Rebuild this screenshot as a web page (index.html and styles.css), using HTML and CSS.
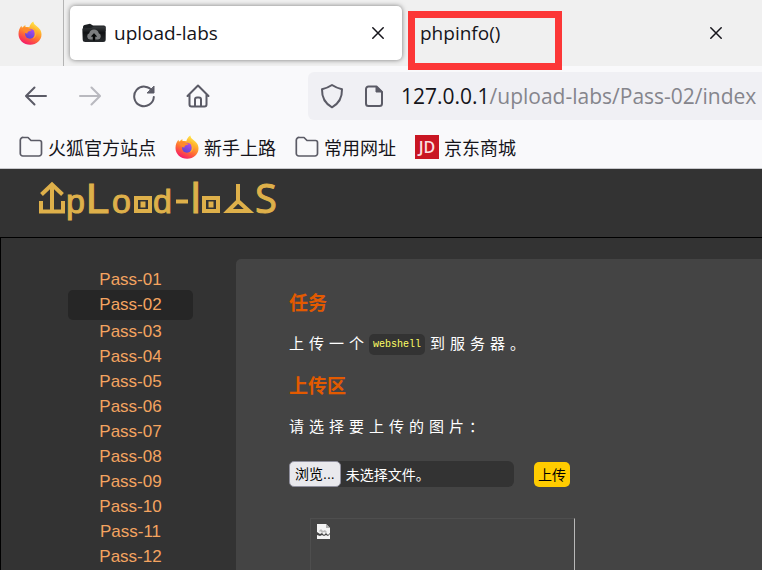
FILE: index.html
```
<!DOCTYPE html>
<html lang="zh-CN">
<head>
<meta charset="utf-8">
<meta name="viewport" content="width=device-width, initial-scale=1">
<title>upload-labs</title>
<link rel="stylesheet" href="styles.css">
</head>
<body>
<svg width="0" height="0" class="defs" aria-hidden="true">
  <defs>
    <linearGradient id="flame" x1="0.8" y1="0" x2="0.3" y2="1">
      <stop offset="0" stop-color="#fff44f"/>
      <stop offset="0.35" stop-color="#ffb02e"/>
      <stop offset="0.65" stop-color="#ff6a35"/>
      <stop offset="1" stop-color="#f5156c"/>
    </linearGradient>
    <linearGradient id="globe" x1="0.8" y1="0" x2="0.3" y2="1">
      <stop offset="0" stop-color="#b44bf0"/>
      <stop offset="1" stop-color="#5a45d0"/>
    </linearGradient>
    <linearGradient id="case" x1="0" y1="0" x2="0" y2="1">
      <stop offset="0" stop-color="#3a3d40"/>
      <stop offset="0.4" stop-color="#101214"/>
      <stop offset="1" stop-color="#26292c"/>
    </linearGradient>
    <symbol id="firefox" viewBox="0 0 24 24">
      <path fill="url(#flame)" d="M15.3 0.5c.4 2.1 1.3 3 2.600 4 2.200 1.600 3.300 2.800 4.300 4.300.8 1.300 1.300 3 1.300 4.700 0 5.900-5 10.200-11.300 10.200C5.600 23.700.5 19 .5 12.900c0-3.600 1.200-6 2.900-8.200l.6 2.100 3.300-2.900.3 2.500c1-.4 2.400-.4 3.700-.1.600-2.500 2-4.600 4-5.800z"/>
      <circle cx="12" cy="12.800" r="5" fill="url(#globe)"/>
      <path fill="#ff8a2b" d="M4 7.200c2.600-1.400 5-1 6.800.5 1 .8 2 .9 3 .9-.4 1-1.500 1.500-2.700 1.700-1.200.3-1.700 1-1.600 2.100-2 .1-3-.7-3.300-2-1 .2-1.800-1-2.200-3.200z"/>
      <path fill="#ffb02e" d="M14.800 6.600c2.600 1 4 3.200 3.700 6-.2 2.600-1.700 4.400-4 5.200 1.600-1.600 2.300-3 2.200-5 0-2.500-.9-4.300-1.900-6.200z"/>
    </symbol>
    <symbol id="folder" viewBox="0 0 24 24">
      <path fill="none" stroke="#5b5b66" stroke-width="1.700" stroke-linejoin="round" d="M4.500 2.500h4.500l3 3h8.500a2 2 0 0 1 2 2v11a2.500 2.500 0 0 1-2.500 2.500H3.800a2.500 2.500 0 0 1-2.500-2.500V5.200a2.700 2.700 0 0 1 3.200-2.700z"/>
    </symbol>
    <symbol id="cross" viewBox="0 0 12 12">
      <path fill="none" stroke="#15141a" stroke-width="1.500" stroke-linecap="round" d="M.8.8l10.400 10.400M11.200.8L.8 11.200"/>
    </symbol>
  </defs>
</svg>

<header class="browser">
  <div class="tabs" role="tablist">
    <button class="pinned" type="button" aria-label="Firefox"><svg width="24" height="24"><use href="#firefox"/></svg></button>
    <div class="tab tab-active" role="tab" aria-selected="true">
      <svg width="24" height="20" viewBox="0 0 24 20" aria-hidden="true">
        <path fill="#1c1f22" d="M1 4a2 2 0 0 1 1.500-2L8 .8 11 2.500h11a1.500 1.500 0 0 1 1.500 1.500v4H1z"/>
        <path fill="url(#case)" d="M.3 5.500 9 5l3-1.500h11.700v13a2.500 2.500 0 0 1-2.500 2.500H3.200a2.500 2.500 0 0 1-2.500-2.500z"/>
        <path fill="#7b7d7f" d="M8 16.500a3.300 3.300 0 0 1-.8-6.300 5 5 0 0 1 9.600 0 3.300 3.300 0 0 1-.8 6.300h-2.700v-3h1.700L12 10.300 9 13.500h1.700v3z"/>
        <path fill="#050607" d="M12 10.500l3 3h-2v4h-2v-4H9z"/>
      </svg>
      <span class="tab-title">upload-labs</span>
      <button class="close" type="button" aria-label="关闭"><svg width="12" height="12"><use href="#cross"/></svg></button>
    </div>
    <div class="tab" role="tab" aria-selected="false">
      <span class="tab-title">phpinfo()</span>
      <button class="close" type="button" aria-label="关闭"><svg width="12" height="12"><use href="#cross"/></svg></button>
      <span class="marker"></span>
    </div>
  </div>

  <div class="toolbar">
    <button class="nav" type="button" aria-label="后退"><svg width="24" height="24" viewBox="0 0 24 24"><path d="M22 12H2.500M10.500 3.500L2 12l8.500 8.500"/></svg></button>
    <button class="nav" type="button" aria-label="前进" disabled><svg width="24" height="24" viewBox="0 0 24 24"><path d="M2 12h19.500M13.500 3.500L22 12l-8.500 8.500"/></svg></button>
    <button class="nav" type="button" aria-label="刷新"><svg width="24" height="24" viewBox="0 0 24 24"><path d="M20.500 7.500A9.800 9.800 0 1 0 21.800 13"/><path class="solid" d="M22 2.500V9h-6.500z"/></svg></button>
    <button class="nav" type="button" aria-label="主页"><svg width="24" height="24" viewBox="0 0 24 24"><path d="M1.500 12L12 1.500 22.500 12M3.500 10.500v10a2 2 0 0 0 2 2h13a2 2 0 0 0 2-2v-10M9 22v-6.500a2 2 0 0 1 2-2h2a2 2 0 0 1 2 2V22"/></svg></button>
    <div class="address">
      <svg width="24" height="26" viewBox="0 0 24 26" aria-hidden="true"><path d="M12 2c3 2 6 3.300 10 4.300.2 8-2.500 14-10 18-7.500-4-10.200-10-10-18C6 5.300 9 4 12 2z"/></svg>
      <svg width="20" height="24" viewBox="0 0 20 24" aria-hidden="true"><path d="M4.500 2.500h8l5.500 5.500v11.500a2.500 2.500 0 0 1-2.500 2.500h-11A2.500 2.500 0 0 1 2 19.500V5a2.500 2.500 0 0 1 2.500-2.500z"/><path class="solid" d="M12 2.500V8h6z"/></svg>
      <div class="url" role="textbox" aria-label="地址" contenteditable="true" spellcheck="false"><b>127.0.0.1</b>/upload-labs/Pass-02/index</div>
    </div>
  </div>

  <nav class="bookmarks">
    <a href="#"><svg width="24" height="24"><use href="#folder"/></svg>火狐官方站点</a>
    <a href="#"><svg width="24" height="24"><use href="#firefox"/></svg>新手上路</a>
    <a href="#"><svg width="24" height="24"><use href="#folder"/></svg>常用网址</a>
    <a href="#"><span class="jd">JD</span>京东商城</a>
  </nav>
</header>

<div class="site">
  <div class="site-head">
    <a href="#" class="logo">
      <svg width="240" height="44" viewBox="0 0 240 44" aria-label="upload-labs">
        <g class="strokes">
          <path d="M14 3v27M3.500 13.500L14 3.500l10.500 10M3 20v10.500h22V20"/>
          <rect x="98" y="17" width="14" height="13"/>
          <path d="M138 20.500h12"/>
          <rect x="166" y="17" width="14" height="13"/>
          <path d="M200 3v16M190 30l10-10 11 10z"/>
        </g>
        <g class="letters">
          <rect x="103" y="21" width="4" height="5"/>
          <rect x="171" y="21" width="4" height="5"/>
          <text x="28" y="32">p</text>
          <text class="tall" x="48" y="32">L</text>
          <text x="74" y="32">o</text>
          <text x="115" y="32">d</text>
          <text class="tall" x="153" y="32">l</text>
          <text class="end" x="217" y="32">S</text>
        </g>
      </svg>
    </a>
  </div>
  <div class="layout">
    <nav class="levels">
      <a href="#">Pass-01</a>
      <a href="#" class="current">Pass-02</a>
      <a href="#">Pass-03</a>
      <a href="#">Pass-04</a>
      <a href="#">Pass-05</a>
      <a href="#">Pass-06</a>
      <a href="#">Pass-07</a>
      <a href="#">Pass-08</a>
      <a href="#">Pass-09</a>
      <a href="#">Pass-10</a>
      <a href="#">Pass-11</a>
      <a href="#">Pass-12</a>
    </nav>
    <main class="panel">
      <h3>任务</h3>
      <p>上传一个<code>webshell</code>到服务器。</p>
      <h3>上传区</h3>
      <form>
        <p>请选择要上传的图片：</p>
        <div class="row">
          <label class="file">
            <input type="file">
            <span class="browse">浏览...</span>
            <span>未选择文件。</span>
          </label>
          <button class="submit" type="button">上传</button>
        </div>
      </form>
      <div class="preview">
        <svg width="14" height="16" viewBox="0 0 14 16" aria-hidden="true">
          <path fill="#f4f4f4" d="M0 0h9l4 4v5l-2 2-2-2-2 2-2-2-2 1-3-2z"/>
          <path fill="#b0b0b0" d="M9 0v4h4z"/>
          <path fill="#bbb" d="M2 7l2-2 2 2 2-1 2 2-1 1-2-1-2 1-2-2-1 1z"/>
          <path fill="#f4f4f4" d="M0 11l3 1 2-1 2 1 2-1 2 1 2-2v5H0z"/>
        </svg>
      </div>
    </main>
  </div>
</div>
</body>
</html>
```
FILE: styles.css
```
* { box-sizing: border-box; }

body {
  margin: 0;
  display: flex;
  flex-direction: column;
  height: 100vh;
  overflow: hidden;
  background: #333;
  font-family: "Liberation Sans", "Noto Sans CJK SC", sans-serif;
}

.defs { position: absolute; }
svg { display: block; flex: none; }
a { text-decoration: none; }
button { font: inherit; border: 0; background: none; padding: 0; cursor: pointer; }

/* Browser chrome */
.browser {
  flex: none;
  background: #f9f9fb;
  border-bottom: 1px solid #c8c8cc;
  font-family: "Open Sans", "Noto Sans CJK SC", sans-serif;
  color: #15141a;
}

.tabs {
  display: flex;
  height: 66px;
  background: #f0f0f0;
}

.pinned {
  display: flex;
  align-items: center;
  justify-content: flex-end;
  width: 64px;
  padding-right: 21px;
  border-right: 1px solid #b4b4b4;
}

.tab {
  position: relative;
  display: flex;
  align-items: center;
  gap: 8px;
  flex: 0 0 332px;
  margin: 6px 0 6px 6px;
  padding: 0 18px 0 12px;
  border-radius: 5px;
  font-size: 19px;
}

.tab-active {
  background: #fff;
  box-shadow: 0 0 5px rgba(0, 0, 0, 0.5);
}

.tab-title { flex: 1; }

.marker {
  position: absolute;
  left: 0;
  top: 5px;
  width: 154px;
  height: 59px;
  border: 7px solid #fc3737;
  pointer-events: none;
}

.toolbar {
  display: flex;
  align-items: center;
  gap: 30px;
  padding: 6px 0 6px 24px;
}

.nav svg, .address svg {
  fill: none;
  stroke: #5b5b66;
  stroke-width: 2;
  stroke-linecap: round;
  stroke-linejoin: round;
}

.nav .solid, .address .solid { fill: #5b5b66; stroke-width: 1; }
.nav:disabled { opacity: 0.4; }

.address {
  flex: 1;
  display: flex;
  align-items: center;
  gap: 20px;
  min-width: 0;
  height: 48px;
  margin-left: 68px;
  padding-left: 12px;
  border-radius: 6px 0 0 6px;
  background: #f0f0f4;
}

.url {
  flex: 1;
  overflow: hidden;
  white-space: nowrap;
  margin-left: -3px;
  font-size: 21px;
  color: #85858c;
}

.url b { font-weight: 400; color: #15141a; }

.bookmarks {
  display: flex;
  gap: 19px;
  height: 42px;
  padding: 0 19px;
}

.bookmarks a {
  display: flex;
  align-items: center;
  gap: 5px;
  font-size: 18px;
  white-space: nowrap;
  color: #15141a;
}

.jd {
  width: 24px;
  height: 24px;
  background: #c91623;
  color: #fbdfe1;
  font-size: 16px;
  font-weight: 600;
  line-height: 24px;
  text-align: center;
}

/* Site */
.site {
  flex: 1;
  display: flex;
  flex-direction: column;
  min-height: 0;
}

.site-head {
  flex: none;
  padding: 12px 38px;
  border-bottom: 1px solid #000;
}

.logo { display: block; }
.logo svg { overflow: visible; }

.strokes { fill: none; stroke: #deb04a; stroke-width: 4; }

.letters {
  fill: #deb04a;
  stroke: #deb04a;
  stroke-width: 1;
  font-family: "Liberation Sans", sans-serif;
  font-size: 34px;
}

.letters .tall { font-size: 42px; }
.letters .end { font-family: "Open Sans", sans-serif; font-size: 40px; }

.layout {
  flex: 1;
  display: flex;
  min-height: 0;
  padding-top: 21px;
  border-left: 1px solid #000;
}

.levels {
  flex: 0 0 235px;
  display: flex;
  flex-direction: column;
  padding: 8px 43px 0 67px;
}

.levels a {
  flex: none;
  height: 25px;
  line-height: 25px;
  border-radius: 5px;
  font-size: 17px;
  text-align: center;
  color: #f4a460;
}

.levels .current {
  height: 30px;
  margin: -2px 0 -1px;
  line-height: 30px;
  background: #262626;
}

.panel {
  flex: 1;
  min-width: 0;
  padding: 29px 53px 0;
  overflow: hidden;
  border-top-left-radius: 5px;
  background: #444;
  color: #fff;
}

.panel h3 {
  margin: 0;
  font-size: 19px;
  line-height: 32px;
  color: #e35a00;
}

.panel p {
  display: flex;
  align-items: center;
  margin: 0;
  padding: 8px 0 11px;
  font-size: 15px;
  line-height: 32px;
  letter-spacing: 5px;
}

.panel code {
  margin-right: 5px;
  padding: 0 4px;
  border-radius: 5px;
  background: #333;
  color: #ff6;
  font-family: "Liberation Mono", monospace;
  font-size: 10px;
  line-height: 21px;
  letter-spacing: normal;
}

.row {
  display: flex;
  align-items: center;
  gap: 20px;
  padding-top: 7px;
  font-size: 14px;
}

.file {
  position: relative;
  display: flex;
  align-items: center;
  gap: 5px;
  flex: 0 1 225px;
  height: 26px;
  border-radius: 6px;
  background: #333;
}

.file input {
  position: absolute;
  inset: 0;
  width: 100%;
  opacity: 0;
}

.browse {
  padding: 0 5px;
  border: 1px solid #8f8f9d;
  border-radius: 5px;
  background: #e9e9ed;
  color: #000;
  line-height: 24px;
}

.submit {
  height: 25px;
  padding: 0 4px;
  border-radius: 5px;
  background: #fc0;
  color: #000;
}

.preview {
  width: 265px;
  height: 200px;
  margin: 31px 0 0 21px;
  padding: 5px 6px;
  border: 1px solid #4e4e4e;
  border-right-color: #b8b8b8;
}
```
